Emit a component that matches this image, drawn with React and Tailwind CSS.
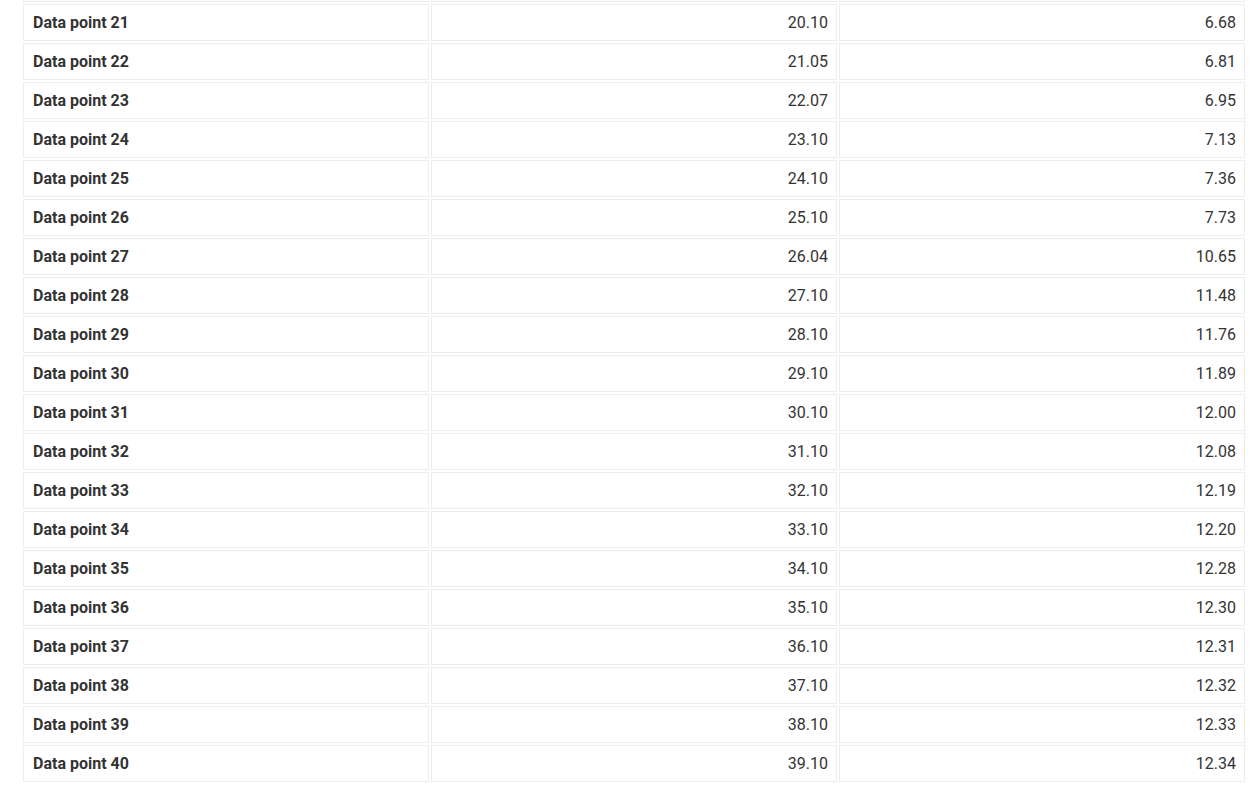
import React from "react";

const rows = [
  [21, "20.10", "6.68"],
  [22, "21.05", "6.81"],
  [23, "22.07", "6.95"],
  [24, "23.10", "7.13"],
  [25, "24.10", "7.36"],
  [26, "25.10", "7.73"],
  [27, "26.04", "10.65"],
  [28, "27.10", "11.48"],
  [29, "28.10", "11.76"],
  [30, "29.10", "11.89"],
  [31, "30.10", "12.00"],
  [32, "31.10", "12.08"],
  [33, "32.10", "12.19"],
  [34, "33.10", "12.20"],
  [35, "34.10", "12.28"],
  [36, "35.10", "12.30"],
  [37, "36.10", "12.31"],
  [38, "37.10", "12.32"],
  [39, "38.10", "12.33"],
  [40, "39.10", "12.34"],
];

const cell = "border border-[#eeede8] py-0";

export default function App() {
  return (
    <div className="bg-white w-[1259px] h-[790px] overflow-hidden" style={{ fontFamily: "Roboto, 'Liberation Sans', sans-serif" }}>
      <table className="ml-[21px] mt-[-37px] w-[1226px] table-fixed border-separate border-spacing-[2px] text-[16px] text-[#333]">
        <tbody>
          <tr className="h-[37px]">
            <td className={cell}></td>
            <td className={cell}></td>
            <td className={cell}></td>
          </tr>
          {rows.map(([n, a, b]) => (
            <tr key={n} className="h-[37px]">
              <td className={`${cell} pl-[9px] pr-2 pt-px font-bold text-left`}>Data point {n}</td>
              <td className={`${cell} px-2 pt-px text-right`}>{a}</td>
              <td className={`${cell} px-2 pt-px text-right`}>{b}</td>
            </tr>
          ))}
        </tbody>
      </table>
    </div>
  );
}
